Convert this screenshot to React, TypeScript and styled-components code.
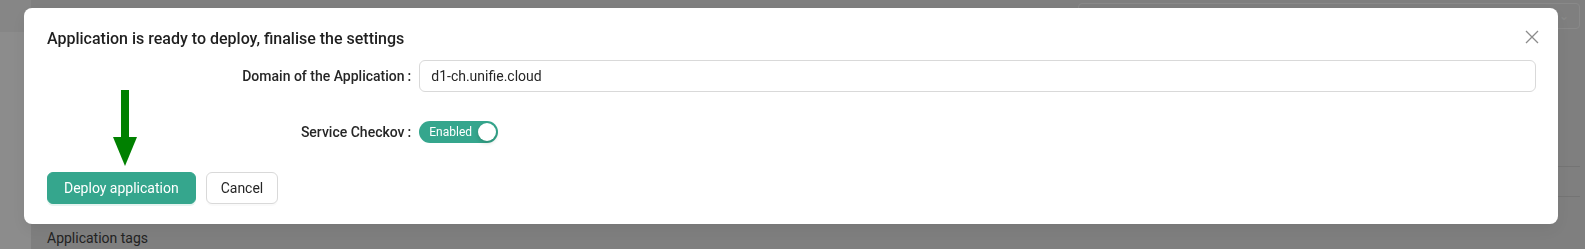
import styled, { createGlobalStyle } from "styled-components";

const GlobalStyle = createGlobalStyle`
  html, body {
    margin: 0;
    padding: 0;
    height: 100%;
    overflow: hidden;
  }
  body {
    font-family: Roboto, "Liberation Sans", Arial, sans-serif;
    font-size: 14px;
    color: #262626;
  }
  #root {
    height: 100%;
  }
`;

const Page = styled.div`
  display: flex;
  width: 1585px;
  height: 249px;
  background: #e8e8e8;
`;

const Sidebar = styled.aside`
  width: 31px;
  flex-shrink: 0;
  display: flex;
  flex-direction: column;
  background: #ffffff;
`;

const SidebarHead = styled.div`
  height: 32px;
  background: #f4f4f4;
`;

const Main = styled.main`
  flex: 1;
  display: flex;
  flex-direction: column;
  padding: 3px 5px 0 16px;
`;

const TopBar = styled.div`
  display: flex;
  justify-content: flex-end;
`;

const SearchBox = styled.div`
  width: 490px;
  height: 24px;
  border: 1px solid #fafafa;
  border-radius: 4px;
  display: flex;
  justify-content: flex-end;
  align-items: center;
  padding-right: 10px;
  color: #fafafa;
  font-size: 12px;
`;

const TableArea = styled.div`
  flex: 1;
  display: flex;
  flex-direction: column;
  justify-content: flex-end;
`;

const TableLine = styled.div`
  height: 29px;
  border-top: 1px solid #d4d4d4;
`;

const SectionTitle = styled.div`
  height: 23px;
  display: flex;
  align-items: center;
  font-size: 14px;
  color: #404040;
`;

const Mask = styled.div`
  position: fixed;
  inset: 0;
  background: rgba(0, 0, 0, 0.45);
  padding: 8px 27px 0 24px;
`;

const Modal = styled.section`
  position: relative;
  background: #ffffff;
  border-radius: 8px;
  padding: 19px 22px 20px 23px;
  box-shadow: 0 6px 16px rgba(0, 0, 0, 0.08);
`;

const Title = styled.h2`
  margin: 0 0 9px;
  font-size: 16px;
  line-height: 24px;
  font-weight: 500;
  color: #1f1f1f;
`;

const CloseButton = styled.button`
  position: absolute;
  top: 18px;
  right: 15px;
  width: 22px;
  height: 22px;
  border: 0;
  padding: 0;
  background: transparent;
  display: flex;
  align-items: center;
  justify-content: center;
  cursor: pointer;
`;

const FormRow = styled.div`
  display: grid;
  grid-template-columns: 25% 1fr;
  align-items: center;
  min-height: 32px;
  margin-bottom: 24px;
`;

const Label = styled.label`
  justify-self: end;
  display: flex;
  align-items: center;
  font-size: 14px;
  font-weight: 500;
  color: #262626;
  white-space: nowrap;

  &::after {
    content: ":";
    margin: 0 8px 0 3px;
  }
`;

const TextInput = styled.input`
  height: 32px;
  box-sizing: border-box;
  border: 1px solid #d9d9d9;
  border-radius: 6px;
  padding: 4px 11px;
  font-family: inherit;
  font-size: 14px;
  color: #262626;
  outline: none;
`;

const Switch = styled.button`
  width: 79px;
  height: 22px;
  border: 0;
  border-radius: 11px;
  background: #35a68d;
  padding: 0 2px 0 10px;
  display: flex;
  align-items: center;
  justify-content: space-between;
  font-family: inherit;
  font-size: 12px;
  color: #ffffff;
  cursor: pointer;
`;

const Knob = styled.span`
  width: 18px;
  height: 18px;
  border-radius: 50%;
  background: #ffffff;
  box-shadow: 0 2px 4px rgba(0, 35, 11, 0.2);
`;

const Actions = styled.div`
  position: relative;
  display: flex;
  gap: 10px;
`;

const Button = styled.button<{ $primary?: boolean }>`
  height: 32px;
  padding: 0 ${(p) => (p.$primary ? "16px" : "14px")};
  border-radius: 6px;
  font-family: inherit;
  font-size: 14px;
  cursor: pointer;
  border: 1px solid ${(p) => (p.$primary ? "#35a68d" : "#d9d9d9")};
  background: ${(p) => (p.$primary ? "#35a68d" : "#ffffff")};
  color: ${(p) => (p.$primary ? "#ffffff" : "#262626")};
  box-shadow: ${(p) => (p.$primary ? "0 2px 0 rgba(5, 145, 110, 0.1)" : "0 2px 0 rgba(0, 0, 0, 0.02)")};
`;

const Arrow = styled.svg`
  position: absolute;
  left: 65px;
  top: -82px;
`;

export default function App() {
  return (
    <>
      <GlobalStyle />
      <Page>
        <Sidebar>
          <SidebarHead />
        </Sidebar>
        <Main>
          <TopBar>
            <SearchBox>⌄</SearchBox>
          </TopBar>
          <TableArea>
            <TableLine />
            <TableLine />
            <SectionTitle>Application tags</SectionTitle>
          </TableArea>
        </Main>
      </Page>

      <Mask>
        <Modal>
          <Title>Application is ready to deploy, finalise the settings</Title>
          <CloseButton type="button" aria-label="Close">
            <svg width="14" height="14" viewBox="0 0 14 14">
              <path d="M1 1 L13 13 M13 1 L1 13" stroke="#8c8c8c" strokeWidth="1.3" fill="none" />
            </svg>
          </CloseButton>

          <FormRow>
            <Label>Domain of the Application</Label>
            <TextInput defaultValue="d1-ch.unifie.cloud" />
          </FormRow>

          <FormRow>
            <Label>Service Checkov</Label>
            <Switch type="button">
              Enabled
              <Knob />
            </Switch>
          </FormRow>

          <Actions>
            <Arrow width="26" height="76" viewBox="0 0 26 76">
              <rect x="9" y="0" width="8" height="48" fill="#008000" />
              <polygon points="1,47 25,47 13,76" fill="#008000" />
            </Arrow>
            <Button $primary type="button">Deploy application</Button>
            <Button type="button">Cancel</Button>
          </Actions>
        </Modal>
      </Mask>
    </>
  );
}
